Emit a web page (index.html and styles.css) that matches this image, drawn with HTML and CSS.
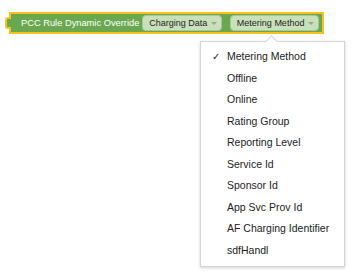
FILE: index.html
```html
<!DOCTYPE html>
<html lang="en">
<head>
  <meta charset="UTF-8">
  <title>PCC Rule Dynamic Override</title>
  <link rel="stylesheet" href="styles.css">
</head>
<body>
  <div class="workspace">
    <div class="block">
      <span class="block-label">PCC Rule Dynamic Override</span>
      <span class="field">Charging Data <i class="caret"></i></span>
      <span class="field">Metering Method <i class="caret"></i></span>
    </div>

    <div class="menu">
      <div class="menu-item checked">Metering Method</div>
      <div class="menu-item">Offline</div>
      <div class="menu-item">Online</div>
      <div class="menu-item">Rating Group</div>
      <div class="menu-item">Reporting Level</div>
      <div class="menu-item">Service Id</div>
      <div class="menu-item">Sponsor Id</div>
      <div class="menu-item">App Svc Prov Id</div>
      <div class="menu-item">AF Charging Identifier</div>
      <div class="menu-item">sdfHandl</div>
    </div>
  </div>
</body>
</html>
```

FILE: styles.css
```css
body {
  margin: 0;
  background: #fff;
  font-family: "Liberation Sans", Arial, sans-serif;
  color: #222;
}
.workspace {
  position: relative;
  width: 364px;
  height: 278px;
  padding: 12px 0 0 9px;
  box-sizing: border-box;
}
.block {
  position: relative;
  display: inline-flex;
  align-items: center;
  gap: 3px;
  height: 22px;
  box-sizing: border-box;
  padding: 0 3px 0 10px;
  background: #6aa84f;
  border: 2px solid #f9c21b;
}
.block::before {
  content: "";
  position: absolute;
  left: -6px;
  top: 3px;
  width: 4px;
  height: 8px;
  background: #6aa84f;
  border: 2px solid #f9c21b;
  border-right: none;
  border-radius: 3px 0 0 3px;
}
.block-label {
  color: #fff;
  font-size: 9.3px;
}
.field {
  display: inline-flex;
  align-items: center;
  gap: 3.5px;
  height: 16px;
  box-sizing: border-box;
  padding: 0 4px 0 6px;
  background: #c9e1ba;
  border: 1px solid #a9c89a;
  border-radius: 4px;
  font-size: 9px;
  color: #1e1e1e;
}
.field + .field {
  margin-left: 5px;
}
.caret {
  width: 0;
  height: 0;
  border-left: 3px solid transparent;
  border-right: 3px solid transparent;
  border-top: 3px solid #8fae86;
  margin-top: 1px;
}
.menu {
  position: absolute;
  left: 200px;
  top: 41px;
  width: 145px;
  box-sizing: border-box;
  padding: 4px 0 5px;
  background: #fff;
  border: 1px solid #d4d4d4;
  box-shadow: 0 1px 3px rgba(0, 0, 0, 0.18);
}
.menu::before {
  content: "";
  position: absolute;
  left: 66px;
  top: -5px;
  width: 8px;
  height: 8px;
  background: #fff;
  border-top: 1px solid #d4d4d4;
  border-left: 1px solid #d4d4d4;
  transform: rotate(45deg);
}
.menu-item {
  position: relative;
  height: 21.5px;
  line-height: 21.5px;
  padding-left: 26px;
  font-size: 10.5px;
  color: #222;
  white-space: nowrap;
}
.menu-item.checked::before {
  content: "\2713";
  position: absolute;
  left: 11px;
  font-family: "DejaVu Sans", sans-serif;
  font-size: 10px;
}
```
